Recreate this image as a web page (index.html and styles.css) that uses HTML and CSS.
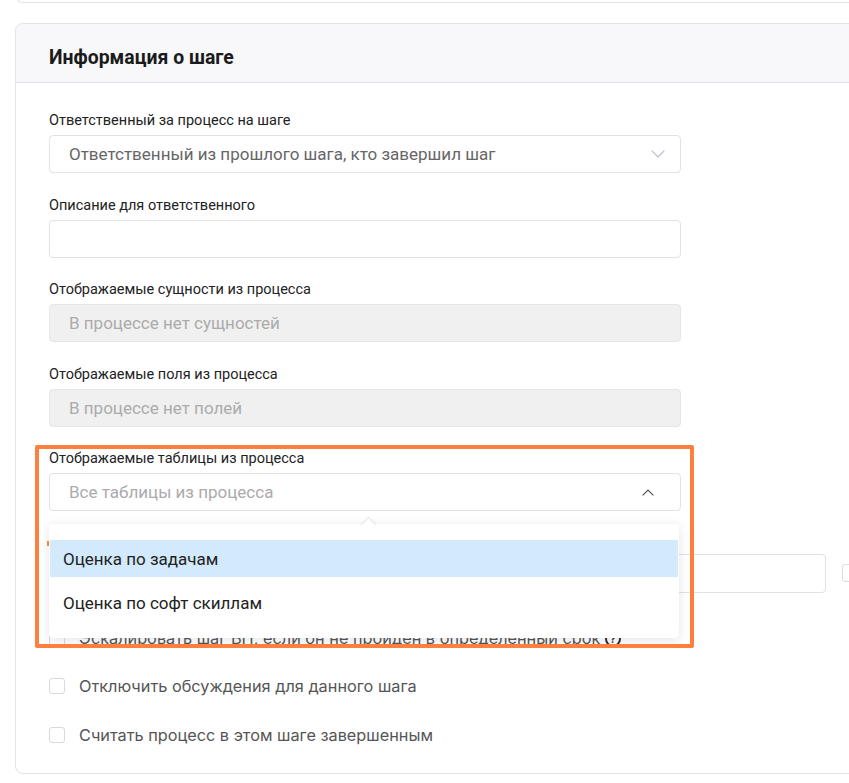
FILE: index.html
```html
<!DOCTYPE html>
<html lang="ru">
<head>
<meta charset="utf-8">
<title>Информация о шаге</title>
<link rel="stylesheet" href="styles.css">
</head>
<body>
<div class="page">
  <div class="prev-card"></div>
  <section class="card">
    <header class="card-head"><h2 class="card-title">Информация о шаге</h2></header>
    <div class="card-body">
      <div class="field">
        <div class="label">Ответственный за процесс на шаге</div>
        <div class="select">
          <span class="value">Ответственный из прошлого шага, кто завершил шаг</span>
          <svg class="chev-down" width="14" height="8" viewBox="0 0 14 8"><path d="M0.7 0.7 L7 7 L13.3 0.7" fill="none" stroke="#b4bcc8" stroke-width="1.2"/></svg>
        </div>
      </div>
      <div class="field">
        <div class="label">Описание для ответственного</div>
        <div class="input"></div>
      </div>
      <div class="field">
        <div class="label">Отображаемые сущности из процесса</div>
        <div class="input disabled"><span class="placeholder">В процессе нет сущностей</span></div>
      </div>
      <div class="field">
        <div class="label">Отображаемые поля из процесса</div>
        <div class="input disabled"><span class="placeholder">В процессе нет полей</span></div>
      </div>
      <div class="field highlighted">
        <div class="label">Отображаемые таблицы из процесса</div>
        <div class="select-wrap">
          <div class="select open">
            <span class="placeholder">Все таблицы из процесса</span>
            <svg class="chev-up" width="12" height="7" viewBox="0 0 12 7"><path d="M0.6 6.4 L6 1 L11.4 6.4" fill="none" stroke="#555" stroke-width="1.2"/></svg>
          </div>
          <div class="dropdown">
            <div class="option active">Оценка по задачам</div>
            <div class="option">Оценка по софт скиллам</div>
          </div>
        </div>
        <div class="annotation"></div>
      </div>
      <div class="field hidden-field">
        <div class="label"><span class="req-mark"></span></div>
        <div class="row">
          <div class="input wide"></div>
          <div class="mini-box"></div>
        </div>
      </div>
      <div class="checks">
        <label class="check"><span class="box"></span><span class="check-text">Эскалировать шаг ВП, если он не пройден в определенный срок <span class="help">?</span></span></label>
        <label class="check"><span class="box"></span><span class="check-text">Отключить обсуждения для данного шага</span></label>
        <label class="check"><span class="box"></span><span class="check-text">Считать процесс в этом шаге завершенным</span></label>
      </div>
    </div>
  </section>
</div>
</body>
</html>
```
FILE: styles.css
```css
html, body {
  margin: 0;
  padding: 0;
  background: #ffffff;
  overflow: hidden;
}
body {
  font-family: Roboto, "Noto Sans", Arial, sans-serif;
  color: #222;
}
.page {
  padding-left: 15px;
}
.prev-card {
  width: 900px;
  height: 40px;
  margin-top: -37px;
  border: 1px solid #e2e2e8;
  border-top: none;
  border-radius: 0 0 8px 8px;
  box-sizing: border-box;
}
.card {
  width: 900px;
  margin-top: 20px;
  border: 1px solid #e2e2e8;
  border-radius: 8px;
}
.card-head {
  background: #f8f8fa;
  border-bottom: 1px solid #e2e2e8;
  border-radius: 8px 8px 0 0;
  padding: 22px 33px 12px;
}
.card-title {
  margin: 0;
  font-size: 19.4px;
  line-height: 24px;
  font-weight: 700;
  color: #1b1b1b;
}
.card-body {
  padding: 26px 0 26px 33px;
  display: flex;
  flex-direction: column;
}
.field {
  width: 632px;
  display: flex;
  flex-direction: column;
  position: relative;
}
.field + .field {
  margin-top: 20.5px;
}
.label {
  font-size: 14.5px;
  line-height: 20px;
  height: 20px;
  color: #222;
  padding-top: 2px;
  margin-bottom: 4px;
  display: flex;
  align-items: center;
}
.select, .input {
  height: 38px;
  box-sizing: border-box;
  border: 1px solid #e1e1e7;
  border-radius: 4px;
  background: #fff;
  display: flex;
  align-items: center;
  padding-left: 19px;
  font-size: 17px;
}
.select {
  justify-content: space-between;
  padding-right: 15px;
}
.select.open {
  padding-right: 26px;
}
.value {
  color: #666;
}
.placeholder {
  color: #ababab;
}
.input.disabled {
  background: #f0f0f0;
  border-color: #e6e6e6;
}
.chev-down, .chev-up {
  display: block;
}
.select-wrap {
  position: relative;
}
.dropdown {
  position: absolute;
  left: 0;
  top: calc(100% + 13px);
  width: 630px;
  box-sizing: border-box;
  background: #fff;
  border-radius: 4px;
  box-shadow: 0 2px 12px rgba(0, 0, 0, 0.11);
  padding: 16px 1px 17px;
  z-index: 5;
}
.dropdown::before {
  content: "";
  position: absolute;
  top: -5px;
  left: 314px;
  width: 10px;
  height: 10px;
  background: #fff;
  border-left: 1px solid #e4e4e4;
  border-top: 1px solid #e4e4e4;
  transform: rotate(45deg);
}
.option {
  height: 37px;
  display: flex;
  align-items: center;
  padding-left: 13px;
  font-size: 17px;
  color: #222;
  position: relative;
}
.option + .option {
  margin-top: 7px;
}
.option.active {
  background: #d3eafd;
}
.annotation {
  position: absolute;
  left: -14px;
  top: -2px;
  width: 659px;
  height: 203px;
  box-sizing: border-box;
  border: 4px solid #ff7f3e;
  border-radius: 2px;
  z-index: 6;
  pointer-events: none;
}
.hidden-field {
  width: auto;
}
.hidden-field .label {
  margin-bottom: 0;
}
.req-mark {
  display: inline-block;
  width: 2px;
  height: 5px;
  background: #ff8a3d;
  margin-left: -2px;
}
.row {
  display: flex;
  align-items: center;
  gap: 16px;
}
.input.wide {
  width: 777px;
  height: 39px;
}
.mini-box {
  width: 18px;
  height: 18px;
  box-sizing: border-box;
  border: 1px solid #dcdce2;
  border-radius: 3px;
  flex: none;
}
.checks {
  display: flex;
  flex-direction: column;
  gap: 24.5px;
  margin-top: 33px;
}
.check {
  display: flex;
  align-items: center;
  height: 24px;
  gap: 14px;
  font-family: Inter, Roboto, sans-serif;
  font-size: 16.3px;
  color: #555;
}
.box {
  width: 16px;
  height: 16px;
  box-sizing: border-box;
  border: 1px solid #d9d9de;
  border-radius: 3px;
  flex: none;
}
.help {
  display: inline-flex;
  width: 16px;
  height: 16px;
  border: 2px solid #333;
  border-radius: 50%;
  box-sizing: border-box;
  font-size: 10px;
  font-weight: 700;
  align-items: center;
  justify-content: center;
  color: #333;
  vertical-align: middle;
}
```
